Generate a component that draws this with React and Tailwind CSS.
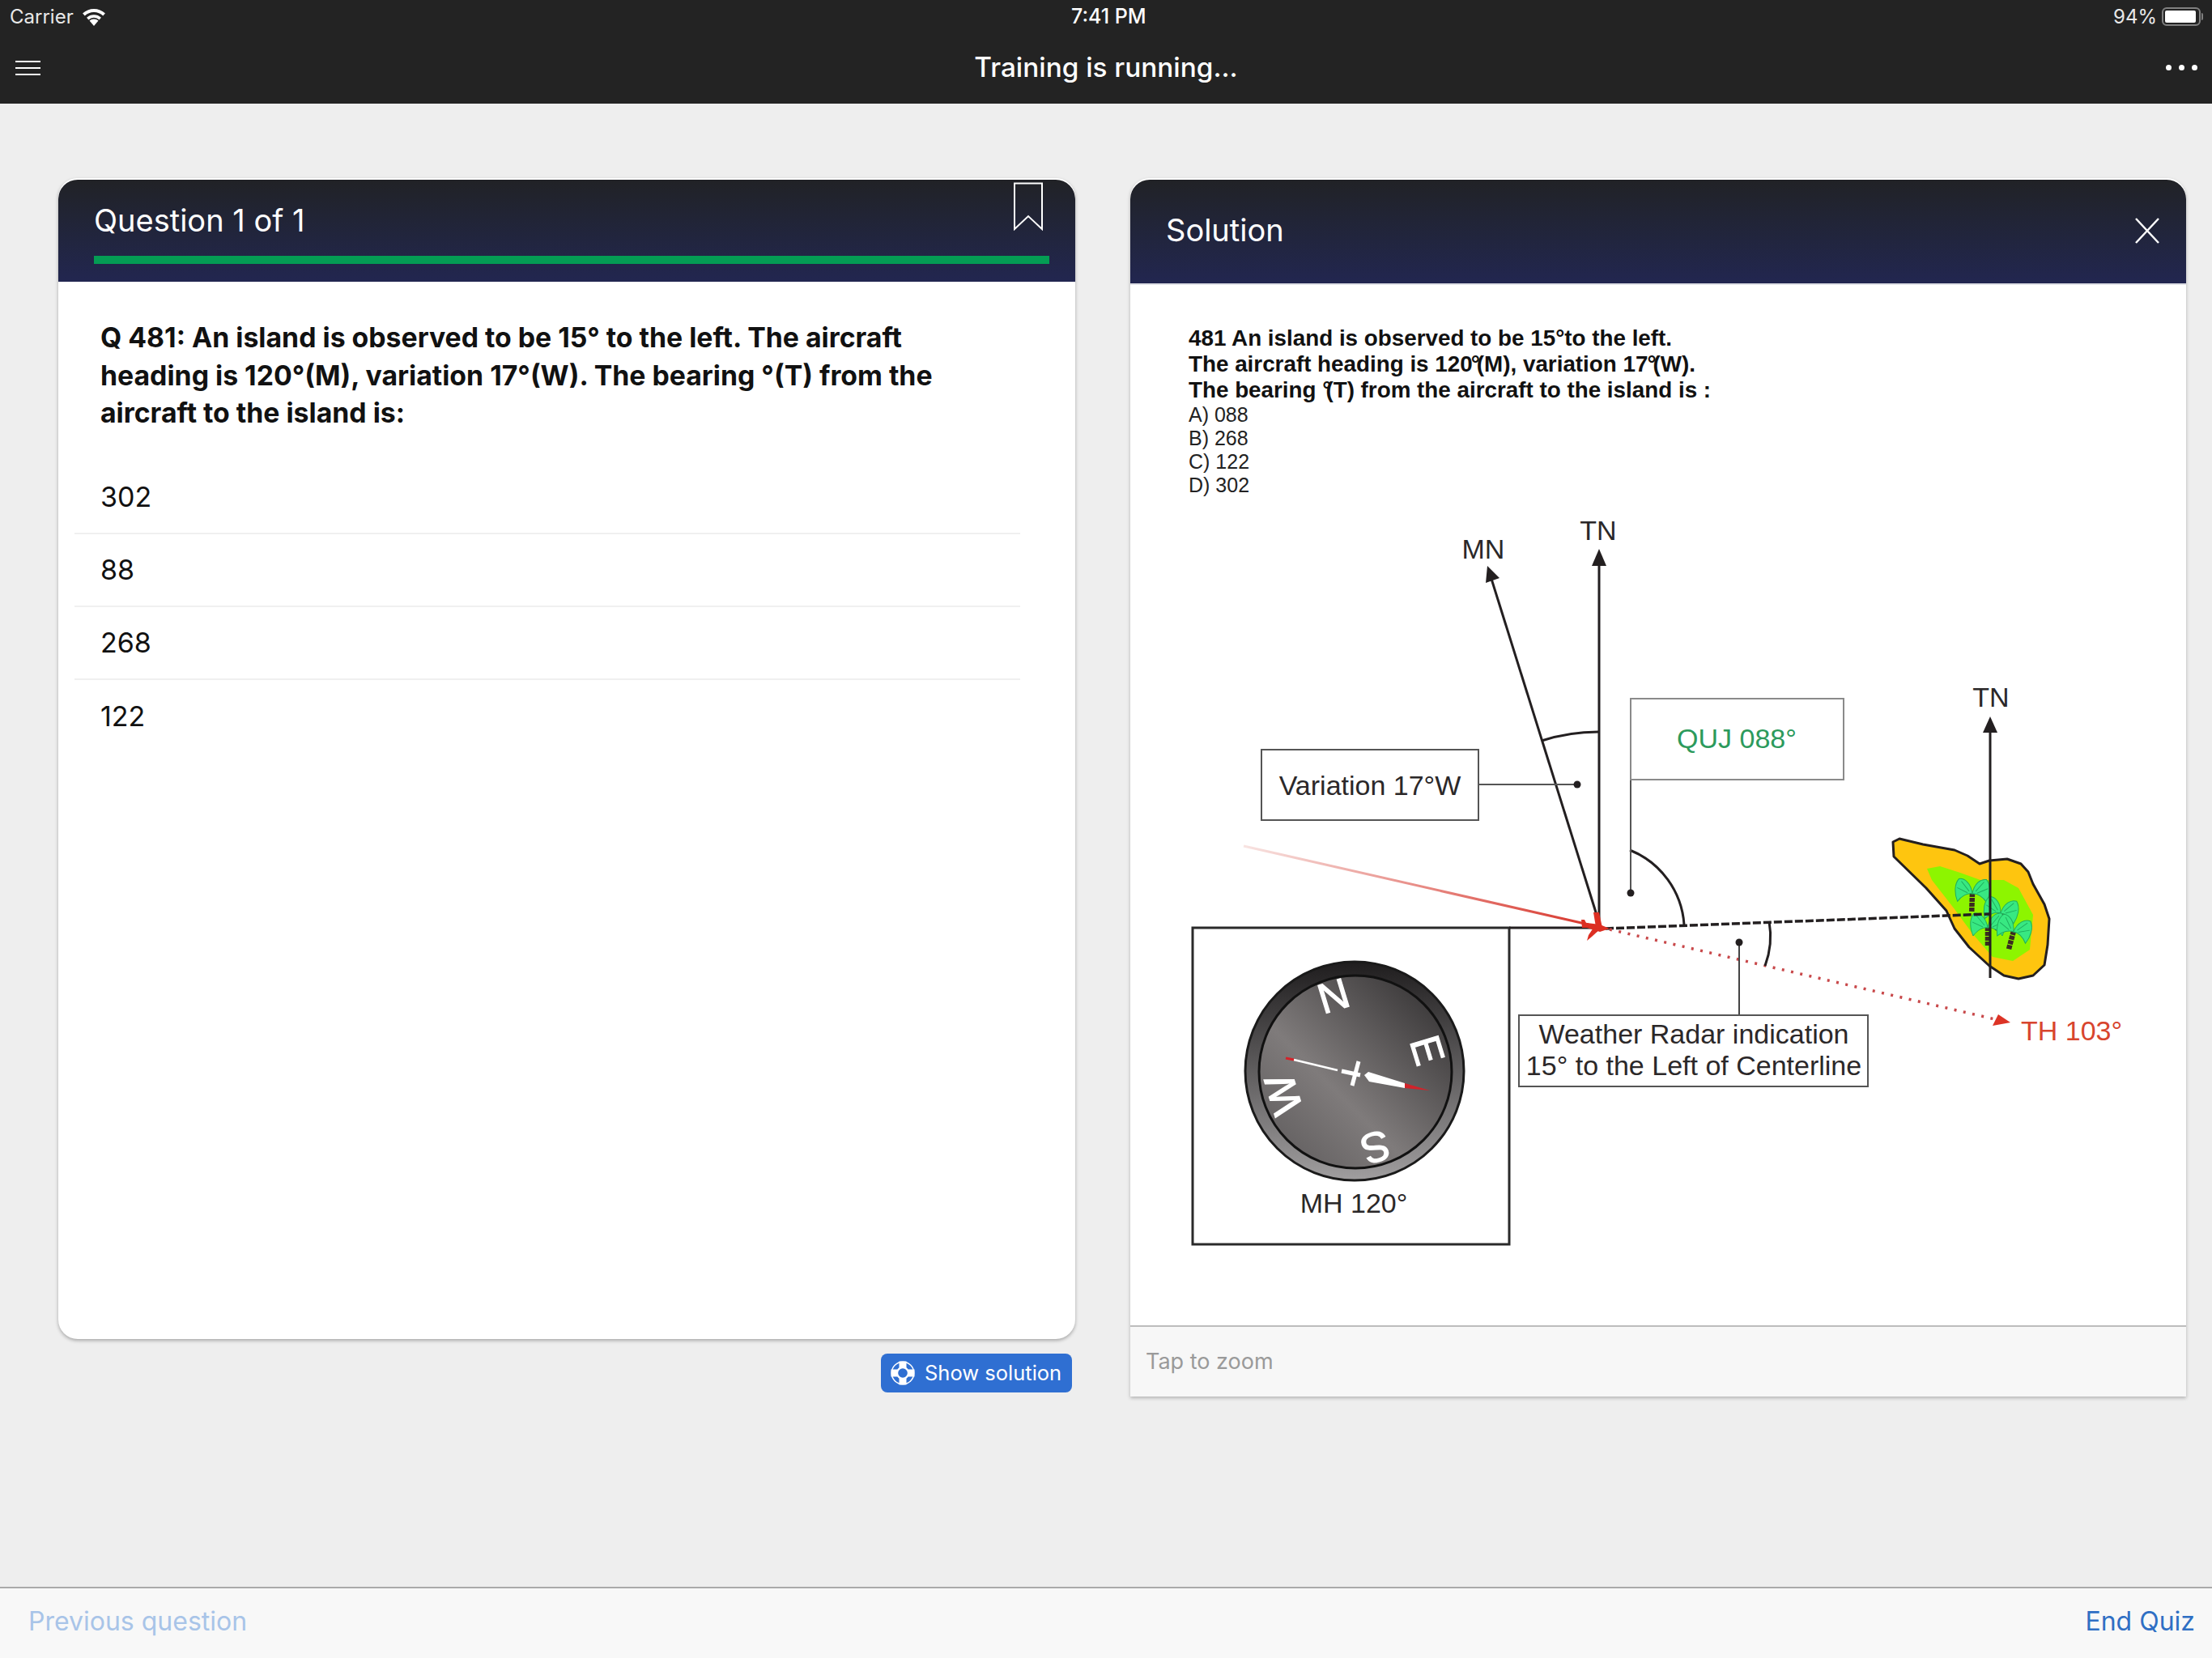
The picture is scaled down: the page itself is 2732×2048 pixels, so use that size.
import React from 'react';

const answers = ['302', '88', '268', '122'];

const Palm = ({ x, y, r = 0 }) => (
  <g transform={`translate(${x} ${y}) rotate(${r})`}>
    <line x1="0" y1="0" x2="0" y2="24" stroke="#3b2c20" strokeWidth="6.5" strokeDasharray="5 1" />
    <path d="M0 1 C-2 -12 -10 -18 -17 -17 C-23 -10 -22 2 -18 11 C-13 4 -6 0 0 1 Z" fill="#38e882" stroke="#1fae5e" strokeWidth="1" />
    <path d="M0 1 C2 -12 10 -18 17 -17 C23 -10 22 2 18 11 C13 4 6 0 0 1 Z" fill="#38e882" stroke="#1fae5e" strokeWidth="1" />
    <path d="M-4 -2 L-14 -14 M-6 0 L-19 -6 M4 -2 L14 -14 M6 0 L19 -6" stroke="#1fae5e" strokeWidth="1" />
  </g>
);

const LifeRing = () => (
  <svg width="30" height="30" viewBox="0 0 30 30">
    <circle cx="15" cy="15" r="14.5" fill="white" />
    <circle cx="15" cy="15" r="10.5" fill="none" stroke="#2f6fd2" strokeWidth="5" />
    <rect x="10.5" y="0.5" width="9" height="29" fill="white" />
    <rect x="0.5" y="10.5" width="29" height="9" fill="white" />
    <circle cx="15" cy="15" r="5.8" fill="#2f6fd2" />
  </svg>
);

const Diagram = () => (
  <svg viewBox="1396 352 1304 1285" className="w-full h-full block" style={{ fontFamily: '"Liberation Sans", Arial, sans-serif' }}>
    <defs>
      <linearGradient id="bezel" x1="0" y1="0" x2="0" y2="1">
        <stop offset="0" stopColor="#1f1d1e" />
        <stop offset="1" stopColor="#a09e9f" />
      </linearGradient>
      <linearGradient id="face" x1="1" y1="0" x2="0" y2="1">
        <stop offset="0" stopColor="#2c2a2b" />
        <stop offset="0.6" stopColor="#7f7b7b" />
        <stop offset="1" stopColor="#5a5758" />
      </linearGradient>
      <linearGradient id="redfade" gradientUnits="userSpaceOnUse" x1="1536" y1="1045" x2="1960" y2="1142">
        <stop offset="0" stopColor="#f8e4e2" />
        <stop offset="1" stopColor="#d8382e" />
      </linearGradient>
    </defs>

    <g fill="#111" fontSize="27.8" fontWeight="700">
      <text x="1468" y="427">481 An island is observed to be 15°to the left.</text>
      <text x="1468" y="459">The aircraft heading is 120<tspan dx="-2">°</tspan><tspan dx="-4">(M), variation 17</tspan><tspan dx="-1">°</tspan><tspan dx="-4">(W).</tspan></text>
      <text x="1468" y="491">The bearing °<tspan dx="-7">(T) from the aircraft to the island is :</tspan></text>
    </g>
    <g fill="#222" fontSize="25">
      <text x="1468" y="520.5">A) 088</text>
      <text x="1468" y="549.5">B) 268</text>
      <text x="1468" y="578.5">C) 122</text>
      <text x="1468" y="607.5">D) 302</text>
    </g>

    {/* north lines */}
    <g fill="#2b2829" fontSize="34">
      <text x="1832" y="690" textAnchor="middle">MN</text>
      <text x="1974" y="667" textAnchor="middle">TN</text>
      <text x="2459" y="873" textAnchor="middle">TN</text>
    </g>
    <line x1="1975" y1="695" x2="1975" y2="1142" stroke="#231f20" strokeWidth="3" />
    <polygon points="1975,678 1966,699 1984,699" fill="#231f20" />
    <line x1="1842" y1="715" x2="1972" y2="1130" stroke="#231f20" strokeWidth="3" />
    <polygon points="1837,699 1835,720 1852,714" fill="#231f20" />

    {/* island */}
    <path d="M2338 1040 L2346 1036 L2375 1043 L2414 1050 L2430 1057 L2445 1067 L2457 1063 L2479 1061 L2496 1067 L2505 1077 L2511 1092 L2525 1117 L2531 1135 L2529 1167 L2525 1192 L2511 1205 L2493 1209 L2475 1205 L2457 1193 L2432 1170 L2414 1147 L2404 1125 L2379 1097 L2339 1058 Z" fill="#fec50f" stroke="#231f20" strokeWidth="3" strokeLinejoin="round" />
    <path d="M2380 1073 L2396 1070 L2421 1078 L2446 1087 L2475 1087 L2493 1097 L2511 1130 L2507 1173 L2486 1187 L2461 1182 L2436 1153 L2414 1123 L2386 1087 Z" fill="#8df500" />
    <Palm x={2436} y={1103} r={2} />
    <Palm x={2471} y={1127} r={10} />
    <Palm x={2455} y={1145} />
    <Palm x={2487} y={1150} r={15} />
    <line x1="2458" y1="900" x2="2458" y2="1208" stroke="#231f20" strokeWidth="3" />
    <polygon points="2458,885 2449,905 2467,905" fill="#231f20" />

    {/* bearings */}
    <line x1="1983" y1="1147" x2="2457" y2="1129" stroke="#231f20" strokeWidth="3.5" strokeDasharray="10 3" />
    <line x1="1988" y1="1148" x2="2464" y2="1259" stroke="#c8484a" strokeWidth="3.5" strokeDasharray="3 8.5" />
    <polygon points="2483,1263 2468,1253 2461,1267" fill="#dc3325" />
    <text x="2496" y="1285" fontSize="34" fill="#d8452e">TH 103°</text>

    <line x1="1536" y1="1045" x2="1962" y2="1142" stroke="url(#redfade)" strokeWidth="3" />

    {/* arcs and pointers */}
    <path d="M1904 915 Q1938 904 1974 904" fill="none" stroke="#231f20" strokeWidth="3" />
    <path d="M2013 1050 A107 107 0 0 1 2080 1142" fill="none" stroke="#231f20" strokeWidth="3" />
    <path d="M2185 1138 Q2190 1166 2180 1193" fill="none" stroke="#231f20" strokeWidth="3" />
    <line x1="2014" y1="963" x2="2014" y2="1103" stroke="#555" strokeWidth="2" />
    <circle cx="2014" cy="1103" r="4.5" fill="#231f20" />
    <line x1="2148" y1="1164" x2="2148" y2="1254" stroke="#444" strokeWidth="2" />
    <circle cx="2148" cy="1164" r="4.5" fill="#231f20" />
    <line x1="1826" y1="969" x2="1948" y2="969" stroke="#555" strokeWidth="2" />
    <circle cx="1948" cy="969" r="4.5" fill="#231f20" />

    {/* labels */}
    <rect x="2014" y="863" width="263" height="100" fill="#fff" stroke="#8a8a8a" strokeWidth="2" />
    <text x="2145" y="924" fontSize="34" fill="#2c9a5c" textAnchor="middle">QUJ 088°</text>
    <rect x="1558" y="926" width="268" height="87" fill="#fff" stroke="#555" strokeWidth="2" />
    <text x="1692" y="982" fontSize="34" fill="#2b2829" textAnchor="middle">Variation 17°W</text>
    <rect x="1876" y="1254" width="431" height="88" fill="#fff" stroke="#555" strokeWidth="2" />
    <text x="2092" y="1289" fontSize="34" fill="#2b2829" textAnchor="middle">Weather Radar indication</text>
    <text x="2092" y="1328" fontSize="34" fill="#2b2829" textAnchor="middle">15° to the Left of Centerline</text>

    {/* compass box */}
    <rect x="1473" y="1146" width="391" height="391" fill="#fff" stroke="#2a2a2a" strokeWidth="3" />
    <line x1="1864" y1="1146" x2="1975" y2="1146" stroke="#231f20" strokeWidth="3" />
    <circle cx="1673" cy="1323" r="135" fill="url(#bezel)" stroke="#1a1a1a" strokeWidth="3" />
    <circle cx="1674" cy="1324" r="119" fill="url(#face)" stroke="#111" strokeWidth="3" />
    <g fill="#fff" stroke="#fff" strokeWidth="1.2" fontSize="52" textAnchor="middle" dominantBaseline="central">
      <text transform="translate(1647 1230) rotate(-17)">N</text>
      <text transform="translate(1763 1297) rotate(73)">E</text>
      <text transform="translate(1699 1417) rotate(163)">S</text>
      <text transform="translate(1585 1352) rotate(253)">W</text>
    </g>
    <line x1="1598" y1="1309" x2="1652" y2="1322" stroke="#fff" strokeWidth="2.5" />
    <line x1="1588" y1="1307" x2="1598" y2="1309" stroke="#d2232a" strokeWidth="3" />
    <path d="M1657 1323 L1680 1328 M1678 1311 L1670 1341" stroke="#fff" strokeWidth="5" fill="none" />
    <polygon points="1685,1328 1690,1324 1735,1338 1735,1344 1691,1336" fill="#fff" />
    <polygon points="1735,1338 1766,1347 1735,1344" fill="#d2232a" />
    <text x="1672" y="1498" fontSize="34" fill="#2b2829" textAnchor="middle">MH 120°</text>

    {/* red aircraft */}
    <g fill="#dc2f23">
      <polygon points="1960,1140 1976,1142 1988,1147 1976,1151 1960,1146" />
      <polygon points="1968,1127 1975,1127 1979,1146 1972,1151" />
      <polygon points="1977,1147 1966,1157 1960,1162 1962,1155 1968,1146" />
      <polygon points="1953,1136 1957,1136 1962,1146 1954,1146" />
    </g>
  </svg>
);

const App = () => {
  return (
    <div className="w-[2732px] h-[2048px] flex flex-col bg-[#eeeeee] font-['Inter','Noto_Sans',sans-serif] overflow-hidden">
      <header className="h-[128px] shrink-0 bg-[#232323] text-white flex flex-col">
        <div className="h-[41px] flex items-center justify-between pl-[12px] pr-[14px] text-[24px] relative">
          <div className="flex items-center gap-[10px]">
            <span className="text-[#e8e8e8]">Carrier</span>
            <svg width="30" height="22" viewBox="3 3 24 18" fill="white">
              <path d="M15 21 L10.5 15.6 A7 7 0 0 1 19.5 15.6 Z" />
              <path d="M7.7 12.6 A11 11 0 0 1 22.3 12.6 L20.4 14.8 A8 8 0 0 0 9.6 14.8 Z" />
              <path d="M3.6 8.4 A16.5 16.5 0 0 1 26.4 8.4 L24.2 10.8 A13.2 13.2 0 0 0 5.8 10.8 Z" />
            </svg>
          </div>
          <span className="absolute left-[1323px] text-[25px] font-medium">7:41 PM</span>
          <div className="flex items-center gap-[6px]">
            <span className="text-[#e8e8e8]">94%</span>
            <div className="w-[48px] h-[23px] rounded-[6px] border-2 border-[#808080] p-[2px] relative">
              <div className="w-[38px] h-full bg-white rounded-[2px]" />
              <div className="absolute -right-[5px] top-[5px] w-[2px] h-[9px] bg-[#808080] rounded-r-sm" />
            </div>
          </div>
        </div>
        <div className="flex-1 flex items-center justify-between pl-[19px] pr-[18px] relative pb-[2px]">
          <div className="flex flex-col gap-[6px] w-[31px]">
            <div className="h-[2px] bg-white" />
            <div className="h-[2px] bg-white" />
            <div className="h-[2px] bg-white" />
          </div>
          <h1 className="absolute inset-x-0 text-center text-[33.3px] font-medium">Training is running...</h1>
          <div className="flex gap-[9px]">
            <div className="w-[7px] h-[7px] rounded-full bg-white" />
            <div className="w-[7px] h-[7px] rounded-full bg-white" />
            <div className="w-[7px] h-[7px] rounded-full bg-white" />
          </div>
        </div>
      </header>

      <main className="flex-1 flex items-start pt-[92px] pl-[72px] gap-[68px]">
        <div className="w-[1256px] flex flex-col items-end">
          <section className="w-full h-[1434px] bg-white rounded-[24px] overflow-hidden shadow-[0_2px_4px_rgba(0,0,0,0.3)] pt-[2px]">
            <div className="h-[126px] bg-linear-to-b from-[#212226] to-[#222650] pl-[44px] pr-[32px] relative rounded-t-[24px]">
              <h2 className="text-white text-[38px] pt-[27px] leading-[46px]">Question 1 of 1</h2>
              <div className="absolute left-[44px] right-[32px] top-[94px] h-[10px] bg-[#049c54]" />
              <svg className="absolute left-[1180px] top-[3px]" width="36" height="60" viewBox="0 0 36 60" fill="none" stroke="white" strokeWidth="2">
                <path d="M1 1.5 H35 V58 L18 42 L1 58 Z" />
              </svg>
            </div>
            <div className="pt-[46px]">
              <p className="pl-[52px] pr-[140px] text-[33.8px] font-bold leading-[46.5px] text-[#111]">
                Q 481: An island is observed to be 15° to the left. The aircraft heading is 120°(M), variation 17°(W). The bearing °(T) from the aircraft to the island is:
              </p>
              <ul className="mt-[36px] ml-[20px] w-[1168px]">
                {answers.map((a, i) => (
                  <li key={a} className={`h-[90px] flex items-center pl-[32px] text-[34px] text-[#111] ${i < 3 ? 'border-b-2 border-[#f0f0f0]' : ''}`}>
                    {a}
                  </li>
                ))}
              </ul>
            </div>
          </section>
          <button className="mt-[18px] mr-[4px] w-[236px] h-[48px] bg-[#2f6fd2] rounded-[8px] text-white text-[25.5px] flex items-center pl-[12px] gap-[12px]">
            <LifeRing />
            Show solution
          </button>
        </div>

        <section className="w-[1304px] h-[1505px] flex flex-col bg-white rounded-t-[24px] shadow-[0_2px_4px_rgba(0,0,0,0.25)] pt-[2px]">
          <div className="h-[128px] shrink-0 bg-linear-to-b from-[#212226] to-[#222650] rounded-t-[24px] flex items-center justify-between pl-[44px] pr-[32px] pb-[3px]">
            <h2 className="text-white text-[38px]">Solution</h2>
            <svg width="32" height="32" viewBox="0 0 32 32" stroke="white" strokeWidth="2.5">
              <path d="M2 1 L30 31 M30 1 L2 31" />
            </svg>
          </div>
          <div className="h-[2px] shrink-0 bg-[#dfe0e6]" />
          <div className="h-[1285px] shrink-0">
            <Diagram />
          </div>
          <div className="flex-1 bg-[#f7f7f7] border-t-2 border-[#bdbdbd] flex items-center pl-[19px] text-[27px] text-[#9a9a9a]">
            Tap to zoom
          </div>
        </section>
      </main>

      <footer className="h-[88px] shrink-0 bg-[#f8f8f8] border-t-2 border-[#aaaaaa] flex items-center justify-between pl-[35px] pr-[21px] pb-[5px] text-[32px]">
        <span className="text-[#a8c4e8]">Previous question</span>
        <span className="text-[#2f6fc4]">End Quiz</span>
      </footer>
    </div>
  );
};

export default App;
